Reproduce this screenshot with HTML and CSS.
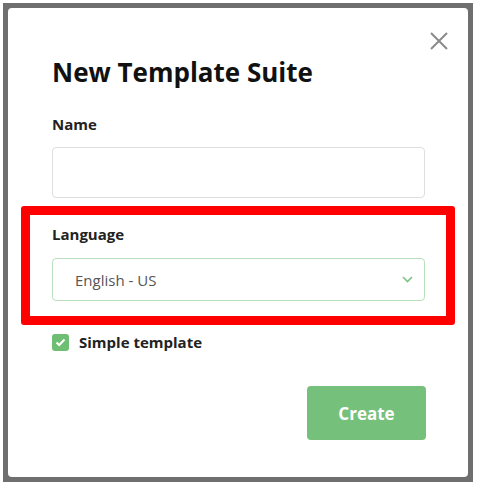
FILE: index.html
```html
<!DOCTYPE html>
<html lang="en">
  <head>
    <meta charset="UTF-8" />
    <meta name="viewport" content="width=device-width, initial-scale=1.0" />
    <title>New Template Suite</title>
    <link rel="stylesheet" href="styles.css">
  </head>
  <body>
    <div class="backdrop">
      <div class="modal">
        <button class="close" type="button" aria-label="Close">
          <svg width="18" height="18" viewBox="0 0 18 18">
            <path d="M1 1 L17 17 M17 1 L1 17" stroke="#8a8a8a" stroke-width="2" fill="none" />
          </svg>
        </button>

        <h1>New Template Suite</h1>

        <form id="suiteForm">
          <div class="form-group">
            <label for="name">Name</label>
            <input type="text" id="name" name="name" />
          </div>

          <!-- highlighted field -->
          <div class="highlight">
            <label for="language">Language</label>
            <div class="select">
              <span id="language">English - US</span>
              <svg class="chevron" width="11" height="7" viewBox="0 0 11 7">
                <path d="M1 1 L5.5 5.5 L10 1" stroke="#7cc383" stroke-width="1.6" fill="none" />
              </svg>
            </div>
          </div>

          <label class="check">
            <span class="box">
              <svg width="11" height="9" viewBox="0 0 11 9">
                <path d="M1.5 4.5 L4.2 7 L9.5 1.5" stroke="white" stroke-width="2" fill="none" />
              </svg>
            </span>
            Simple template
          </label>

          <div class="actions">
            <button type="submit" class="primary">Create</button>
          </div>
        </form>
      </div>
    </div>
  </body>
</html>
```

FILE: styles.css
```css
body {
  margin: 0;
  padding: 0;
  background: #fff;
  font-family: "Open Sans", "Noto Sans", sans-serif;
  color: #222;
}
.backdrop {
  margin: 3px 4px 4px 3px;
  height: 469px;
  padding: 5px;
  background: #6f6f6f;
}
.modal {
  position: relative;
  height: 469px;
  box-sizing: border-box;
  padding: 47px 43px 0 44px;
  background: #fff;
  border-radius: 4px;
}
.close {
  position: absolute;
  top: 24px;
  right: 20px;
  padding: 0;
  border: none;
  background: none;
  line-height: 0;
  cursor: pointer;
}
h1 {
  margin: 0 0 25px;
  font-size: 26px;
  line-height: 34px;
  font-weight: 700;
  color: #111;
}
label {
  display: block;
  font-size: 15px;
  line-height: 20px;
  font-weight: 700;
  color: #222;
}
.form-group label {
  margin-bottom: 13px;
}
input {
  display: block;
  width: 100%;
  height: 51px;
  box-sizing: border-box;
  border: 1px solid #dedede;
  border-radius: 4px;
  padding: 0 21px;
  font: inherit;
}
.highlight {
  margin: 8px -30px 0 -31px;
  padding: 9px 21px 15px 22px;
  border: 9px solid #ff0000;
  border-radius: 3px;
}
.highlight label {
  margin-bottom: 14px;
}
.select {
  display: flex;
  align-items: center;
  justify-content: space-between;
  height: 43px;
  box-sizing: border-box;
  padding: 0 11px 0 22px;
  border: 1px solid #b9dfbc;
  border-radius: 4px;
  font-size: 15px;
  color: #555;
}
.check {
  display: flex;
  align-items: center;
  gap: 10px;
  margin-top: 7px;
  font-size: 15px;
}
.box {
  display: flex;
  align-items: center;
  justify-content: center;
  width: 17px;
  height: 17px;
  border-radius: 3px;
  background: #6ebf74;
}
.actions {
  display: flex;
  justify-content: flex-end;
  margin-top: 34px;
}
.primary {
  width: 119px;
  height: 54px;
  margin-right: -1px;
  border: none;
  border-radius: 4px;
  background: #75c07b;
  color: #fff;
  font: inherit;
  font-size: 17px;
  font-weight: 700;
  cursor: pointer;
}
```
